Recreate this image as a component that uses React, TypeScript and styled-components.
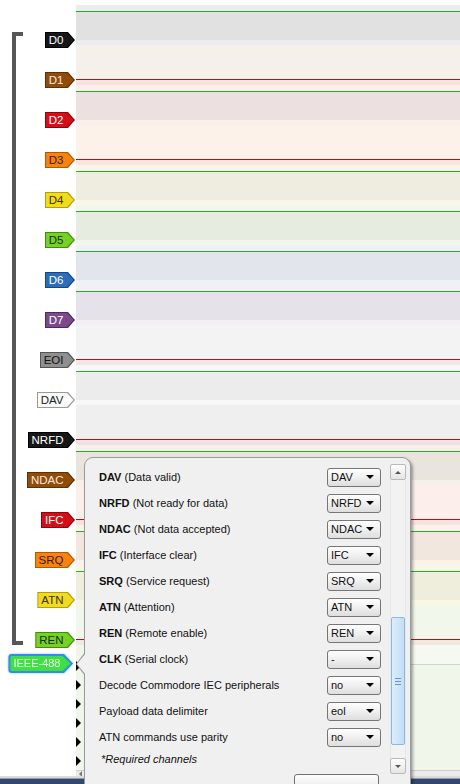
import React from "react";
import styled, { createGlobalStyle } from "styled-components";

const GlobalStyle = createGlobalStyle`
  html, body { margin: 0; padding: 0; background: #fff; }
  body { font-family: "Liberation Sans", Tahoma, Arial, sans-serif; }
`;

interface Channel {
  name: string;
  fill: string;
  edge: string;
  ink: string;
  high: boolean;
  light: string;
  dark: string;
}

const channels: Channel[] = [
  { name: "D0", fill: "#171717", edge: "#000", ink: "#fff", high: true, light: "#ececec", dark: "#e1e1e1" },
  { name: "D1", fill: "#8f4c0b", edge: "#5e3006", ink: "#fbe9d6", high: false, light: "#f5f0ea", dark: "#eae4de" },
  { name: "D2", fill: "#d40f18", edge: "#8e060c", ink: "#fff", high: true, light: "#fbeeeb", dark: "#ede0e0" },
  { name: "D3", fill: "#f7830f", edge: "#b35805", ink: "#3b1a00", high: false, light: "#fdf2ea", dark: "#f1e7df" },
  { name: "D4", fill: "#f1db1f", edge: "#b59f06", ink: "#3b3000", high: true, light: "#f8f7e8", dark: "#eeede0" },
  { name: "D5", fill: "#76d026", edge: "#3f8e0c", ink: "#16300a", high: true, light: "#f1f7ea", dark: "#e6ece0" },
  { name: "D6", fill: "#2d6cb9", edge: "#164686", ink: "#fff", high: true, light: "#eef1f6", dark: "#e2e5ec" },
  { name: "D7", fill: "#7b4a8b", edge: "#4d2a5b", ink: "#fff", high: true, light: "#f3eff5", dark: "#e6e2ea" },
  { name: "EOI", fill: "#8f8f8f", edge: "#555", ink: "#111", high: false, light: "#f3f3f3", dark: "#e9e9e9" },
  { name: "DAV", fill: "#fafafa", edge: "#9a9a9a", ink: "#222", high: true, light: "#f7f7f7", dark: "#ececec" },
  { name: "NRFD", fill: "#171717", edge: "#000", ink: "#fff", high: false, light: "#efefef", dark: "#e4e4e4" },
  { name: "NDAC", fill: "#8f4c0b", edge: "#5e3006", ink: "#fbe9d6", high: true, light: "#f5f0ea", dark: "#eae4de" },
  { name: "IFC", fill: "#d40f18", edge: "#8e060c", ink: "#fff", high: false, light: "#fbeeeb", dark: "#ede0e0" },
  { name: "SRQ", fill: "#f7830f", edge: "#b35805", ink: "#3b1a00", high: true, light: "#fdf2ea", dark: "#f1e7df" },
  { name: "ATN", fill: "#f1db1f", edge: "#b59f06", ink: "#3b3000", high: true, light: "#f8f7e6", dark: "#efeedd" },
  { name: "REN", fill: "#76d026", edge: "#3f8e0c", ink: "#16300a", high: false, light: "#f1f7ea", dark: "#e6ece0" },
];

interface Setting {
  key?: string;
  desc: string;
  value: string;
}

const settings: Setting[] = [
  { key: "DAV", desc: "(Data valid)", value: "DAV" },
  { key: "NRFD", desc: "(Not ready for data)", value: "NRFD" },
  { key: "NDAC", desc: "(Not data accepted)", value: "NDAC" },
  { key: "IFC", desc: "(Interface clear)", value: "IFC" },
  { key: "SRQ", desc: "(Service request)", value: "SRQ" },
  { key: "ATN", desc: "(Attention)", value: "ATN" },
  { key: "REN", desc: "(Remote enable)", value: "REN" },
  { key: "CLK", desc: "(Serial clock)", value: "-" },
  { desc: "Decode Commodore IEC peripherals", value: "no" },
  { desc: "Payload data delimiter", value: "eol" },
  { desc: "ATN commands use parity", value: "no" },
];

const HIGH_LINE = "#22b022";
const LOW_LINE = "#b0141a";

const App = () => {
  return (
    <Page>
      <GlobalStyle />
      <Main>
        <Sidebar>
          <Bracket />
          <LabelColumn>
            {channels.map((c) => (
              <LabelRow key={c.name}>
                <TagEdge $edge={c.edge}>
                  <TagBody $fill={c.fill} $ink={c.ink}>{c.name}</TagBody>
                </TagEdge>
              </LabelRow>
            ))}
            <AnalyzerTag>
              <AnalyzerEdge>
                <AnalyzerBody>IEEE-488</AnalyzerBody>
              </AnalyzerEdge>
            </AnalyzerTag>
          </LabelColumn>
        </Sidebar>

        <Waves>
          {channels.map((c) => (
            <WaveRow key={c.name} $bg={c.light}>
              <Trace $color={c.high ? HIGH_LINE : "transparent"} />
              <Band $fill={c.high ? c.dark : "transparent"} />
              <Trace $color={c.high ? c.dark : LOW_LINE} />
              <Tail $fill={c.high ? "transparent" : "rgba(235,120,120,0.10)"} />
            </WaveRow>
          ))}
          <Analyzer>
            <Expanders>
              {[0, 1, 2, 3, 4, 5].map((i) => (
                <ExpanderRow key={i}>
                  <Expander />
                </ExpanderRow>
              ))}
            </Expanders>
            <Lanes>
              <LaneHead />
              <LaneBody />
            </Lanes>
          </Analyzer>
          <HScroll>
            <HArrow />
          </HScroll>
        </Waves>
      </Main>
      <Footer />

      <Panel>
        <Settings>
          {settings.map((s, i) => (
            <SettingRow key={i}>
              <SettingText>
                {s.key && <b>{s.key}</b>}
                {s.key ? " " : ""}
                {s.desc}
              </SettingText>
              <Select>
                <span>{s.value}</span>
                <Caret />
              </Select>
            </SettingRow>
          ))}
          <Note>*Required channels</Note>
          <ButtonRow>
            <Button />
          </ButtonRow>
        </Settings>
        <ScrollBar>
          <ScrollButton><ArrowUp /></ScrollButton>
          <Track>
            <Thumb><Grip /></Thumb>
          </Track>
          <ScrollButton><ArrowDown /></ScrollButton>
        </ScrollBar>
      </Panel>
    </Page>
  );
};

export default App;

const Page = styled.div`
  position: relative;
  width: 460px;
  height: 784px;
  overflow: hidden;
  background: #fff;
  display: flex;
  flex-direction: column;
`;

const Main = styled.div`
  height: 776px;
  display: flex;
`;

const Sidebar = styled.div`
  width: 76px;
  flex-shrink: 0;
  display: flex;
`;

const Bracket = styled.div`
  flex-shrink: 0;
  margin: 32px 0 0 12px;
  width: 11px;
  height: 613px;
  box-sizing: border-box;
  border: 4px solid #575757;
  border-right: none;
`;

const LabelColumn = styled.div`
  flex: 1;
  min-width: 0;
  padding: 20px 1px 0 0;
  display: flex;
  flex-direction: column;
  align-items: flex-end;
`;

const LabelRow = styled.div`
  height: 40px;
  display: flex;
  align-items: center;
`;

const TagEdge = styled.div<{ $edge: string }>`
  height: 16px;
  box-sizing: border-box;
  padding: 1px 1.5px 1px 1px;
  background: ${(p) => p.$edge};
  clip-path: polygon(0 0, calc(100% - 7px) 0, 100% 50%, calc(100% - 7px) 100%, 0 100%);
  display: flex;
  white-space: nowrap;
`;

const TagBody = styled.div<{ $fill: string; $ink: string }>`
  height: 14px;
  padding: 0 10px 0 3px;
  background: ${(p) => p.$fill};
  color: ${(p) => p.$ink};
  font-size: 11.5px;
  line-height: 14px;
  clip-path: polygon(0 0, calc(100% - 6.5px) 0, 100% 50%, calc(100% - 6.5px) 100%, 0 100%);
`;

const AnalyzerTag = styled.div`
  margin: -6px 2px 0 0;
  flex-shrink: 0;
  white-space: nowrap;
  filter: drop-shadow(0 0 1px #7cc0f5);
`;

const AnalyzerEdge = styled.div`
  height: 19px;
  box-sizing: border-box;
  padding: 2px 2.5px 2px 2px;
  background: #2f8fe3;
  border-radius: 4px 0 0 4px;
  clip-path: polygon(0 0, calc(100% - 9px) 0, 100% 50%, calc(100% - 9px) 100%, 0 100%);
  display: flex;
`;

const AnalyzerBody = styled.div`
  height: 15px;
  padding: 0 10px 0 3px;
  background: #40e044;
  border-radius: 2px 0 0 2px;
  color: #e9ffe6;
  font-size: 11px;
  line-height: 15px;
  clip-path: polygon(0 0, calc(100% - 8px) 0, 100% 50%, calc(100% - 8px) 100%, 0 100%);
`;

const Waves = styled.div`
  flex: 1;
  display: flex;
  flex-direction: column;
  padding-top: 5px;
`;

const WaveRow = styled.div<{ $bg: string }>`
  height: 40px;
  flex-shrink: 0;
  box-sizing: border-box;
  padding-top: 6px;
  background: ${(p) => p.$bg};
  display: flex;
  flex-direction: column;
`;

const Trace = styled.div<{ $color: string }>`
  height: 1px;
  flex-shrink: 0;
  background: ${(p) => p.$color};
`;

const Band = styled.div<{ $fill: string }>`
  height: 27px;
  flex-shrink: 0;
  background: ${(p) => p.$fill};
`;

const Tail = styled.div<{ $fill: string }>`
  height: 5px;
  flex-shrink: 0;
  background: ${(p) => p.$fill};
`;

const Analyzer = styled.div`
  flex: 1;
  display: flex;
  background: #f1f6ec;
`;

const Expanders = styled.div`
  width: 7px;
  padding-top: 11px;
  display: flex;
  flex-direction: column;
`;

const ExpanderRow = styled.div`
  height: 19px;
  display: flex;
  align-items: center;
`;

const Expander = styled.div`
  width: 0;
  height: 0;
  border-left: 5px solid #000;
  border-top: 5px solid transparent;
  border-bottom: 5px solid transparent;
`;

const Lanes = styled.div`
  flex: 1;
  display: flex;
  flex-direction: column;
`;

const LaneHead = styled.div`
  height: 19px;
  background: #f5f9f1;
  border-bottom: 1px solid #d0d6ca;
`;

const LaneBody = styled.div`
  flex: 1;
  background: #f0f6ea;
`;

const HScroll = styled.div`
  height: 13px;
  box-sizing: border-box;
  background: #ebebeb;
  border-top: 1px solid #d0d0d0;
  display: flex;
  align-items: center;
  padding-left: 3px;
`;

const HArrow = styled.div`
  width: 0;
  height: 0;
  border-right: 3px solid #777;
  border-top: 3px solid transparent;
  border-bottom: 3px solid transparent;
`;

const Footer = styled.div`
  height: 8px;
  background: linear-gradient(#dcdcdc 0 2px, #8f9aae 2px 3px, #34476d 3px);
`;

const Panel = styled.div`
  position: absolute;
  left: 84px;
  top: 457px;
  width: 327px;
  height: 345px;
  box-sizing: border-box;
  background: #f0f0f0;
  border: 1px solid #9a9a9a;
  border-radius: 9px 9px 0 0;
  box-shadow: 2px 2px 3px rgba(0, 0, 0, 0.35);
  display: flex;
  color: #111;

  &::before {
    content: "";
    position: absolute;
    left: -9px;
    top: 194px;
    border-style: solid;
    border-width: 12px 9px 12px 0;
    border-color: transparent #9a9a9a transparent transparent;
  }

  &::after {
    content: "";
    position: absolute;
    left: -8px;
    top: 195px;
    border-style: solid;
    border-width: 11px 9px 11px 0;
    border-color: transparent #f0f0f0 transparent transparent;
  }
`;

const Settings = styled.div`
  flex: 1;
  padding: 6px 9px 0 14px;
  display: flex;
  flex-direction: column;
`;

const SettingRow = styled.div`
  height: 26px;
  display: flex;
  align-items: center;
  justify-content: space-between;
`;

const SettingText = styled.div`
  font-size: 11px;
  white-space: nowrap;
`;

const Select = styled.div`
  width: 54px;
  height: 19px;
  box-sizing: border-box;
  border: 1px solid #767676;
  border-radius: 3px;
  background: linear-gradient(#fefefe, #f1f1f1 45%, #dedede);
  display: flex;
  align-items: center;
  justify-content: space-between;
  padding: 0 6px 0 3px;
  font-size: 11px;
  white-space: nowrap;
`;

const Caret = styled.div`
  width: 0;
  height: 0;
  flex-shrink: 0;
  border-top: 4px solid #000;
  border-left: 4px solid transparent;
  border-right: 4px solid transparent;
`;

const Note = styled.div`
  height: 18px;
  display: flex;
  align-items: center;
  padding-left: 2px;
  font-size: 11px;
  font-style: italic;
`;

const ButtonRow = styled.div`
  display: flex;
  justify-content: flex-end;
  padding-top: 6px;
  margin-right: 2px;
`;

const Button = styled.div`
  width: 85px;
  height: 22px;
  box-sizing: border-box;
  border: 1px solid #707070;
  border-radius: 3px;
  background: linear-gradient(#fdfdfd, #e4e4e4);
`;

const ScrollBar = styled.div`
  width: 16px;
  height: 310px;
  margin: 6px 4px 0 0;
  display: flex;
  flex-direction: column;
  background: #f2f2f2;
`;

const ScrollButton = styled.div`
  height: 16px;
  box-sizing: border-box;
  border: 1px solid #b9b9b9;
  border-radius: 2px;
  background: linear-gradient(#fdfdfd, #e5e5e5);
  display: flex;
  align-items: center;
  justify-content: center;
`;

const ArrowUp = styled.div`
  width: 0;
  height: 0;
  border-bottom: 3px solid #555;
  border-left: 3px solid transparent;
  border-right: 3px solid transparent;
`;

const ArrowDown = styled.div`
  width: 0;
  height: 0;
  border-top: 3px solid #555;
  border-left: 3px solid transparent;
  border-right: 3px solid transparent;
`;

const Track = styled.div`
  flex: 1;
  padding: 137px 1px 0;
  border-left: 1px solid #e6e6e6;
  border-right: 1px solid #e6e6e6;
`;

const Thumb = styled.div`
  height: 128px;
  box-sizing: border-box;
  margin: 0 -1px;
  border: 1px solid #8db8df;
  border-radius: 2px;
  background: linear-gradient(to right, #dcedfc, #c2ddf6);
  display: flex;
  align-items: center;
  justify-content: center;
`;

const Grip = styled.div`
  width: 6px;
  height: 7px;
  background: repeating-linear-gradient(#6d95bd 0 1px, transparent 1px 3px);
`;
